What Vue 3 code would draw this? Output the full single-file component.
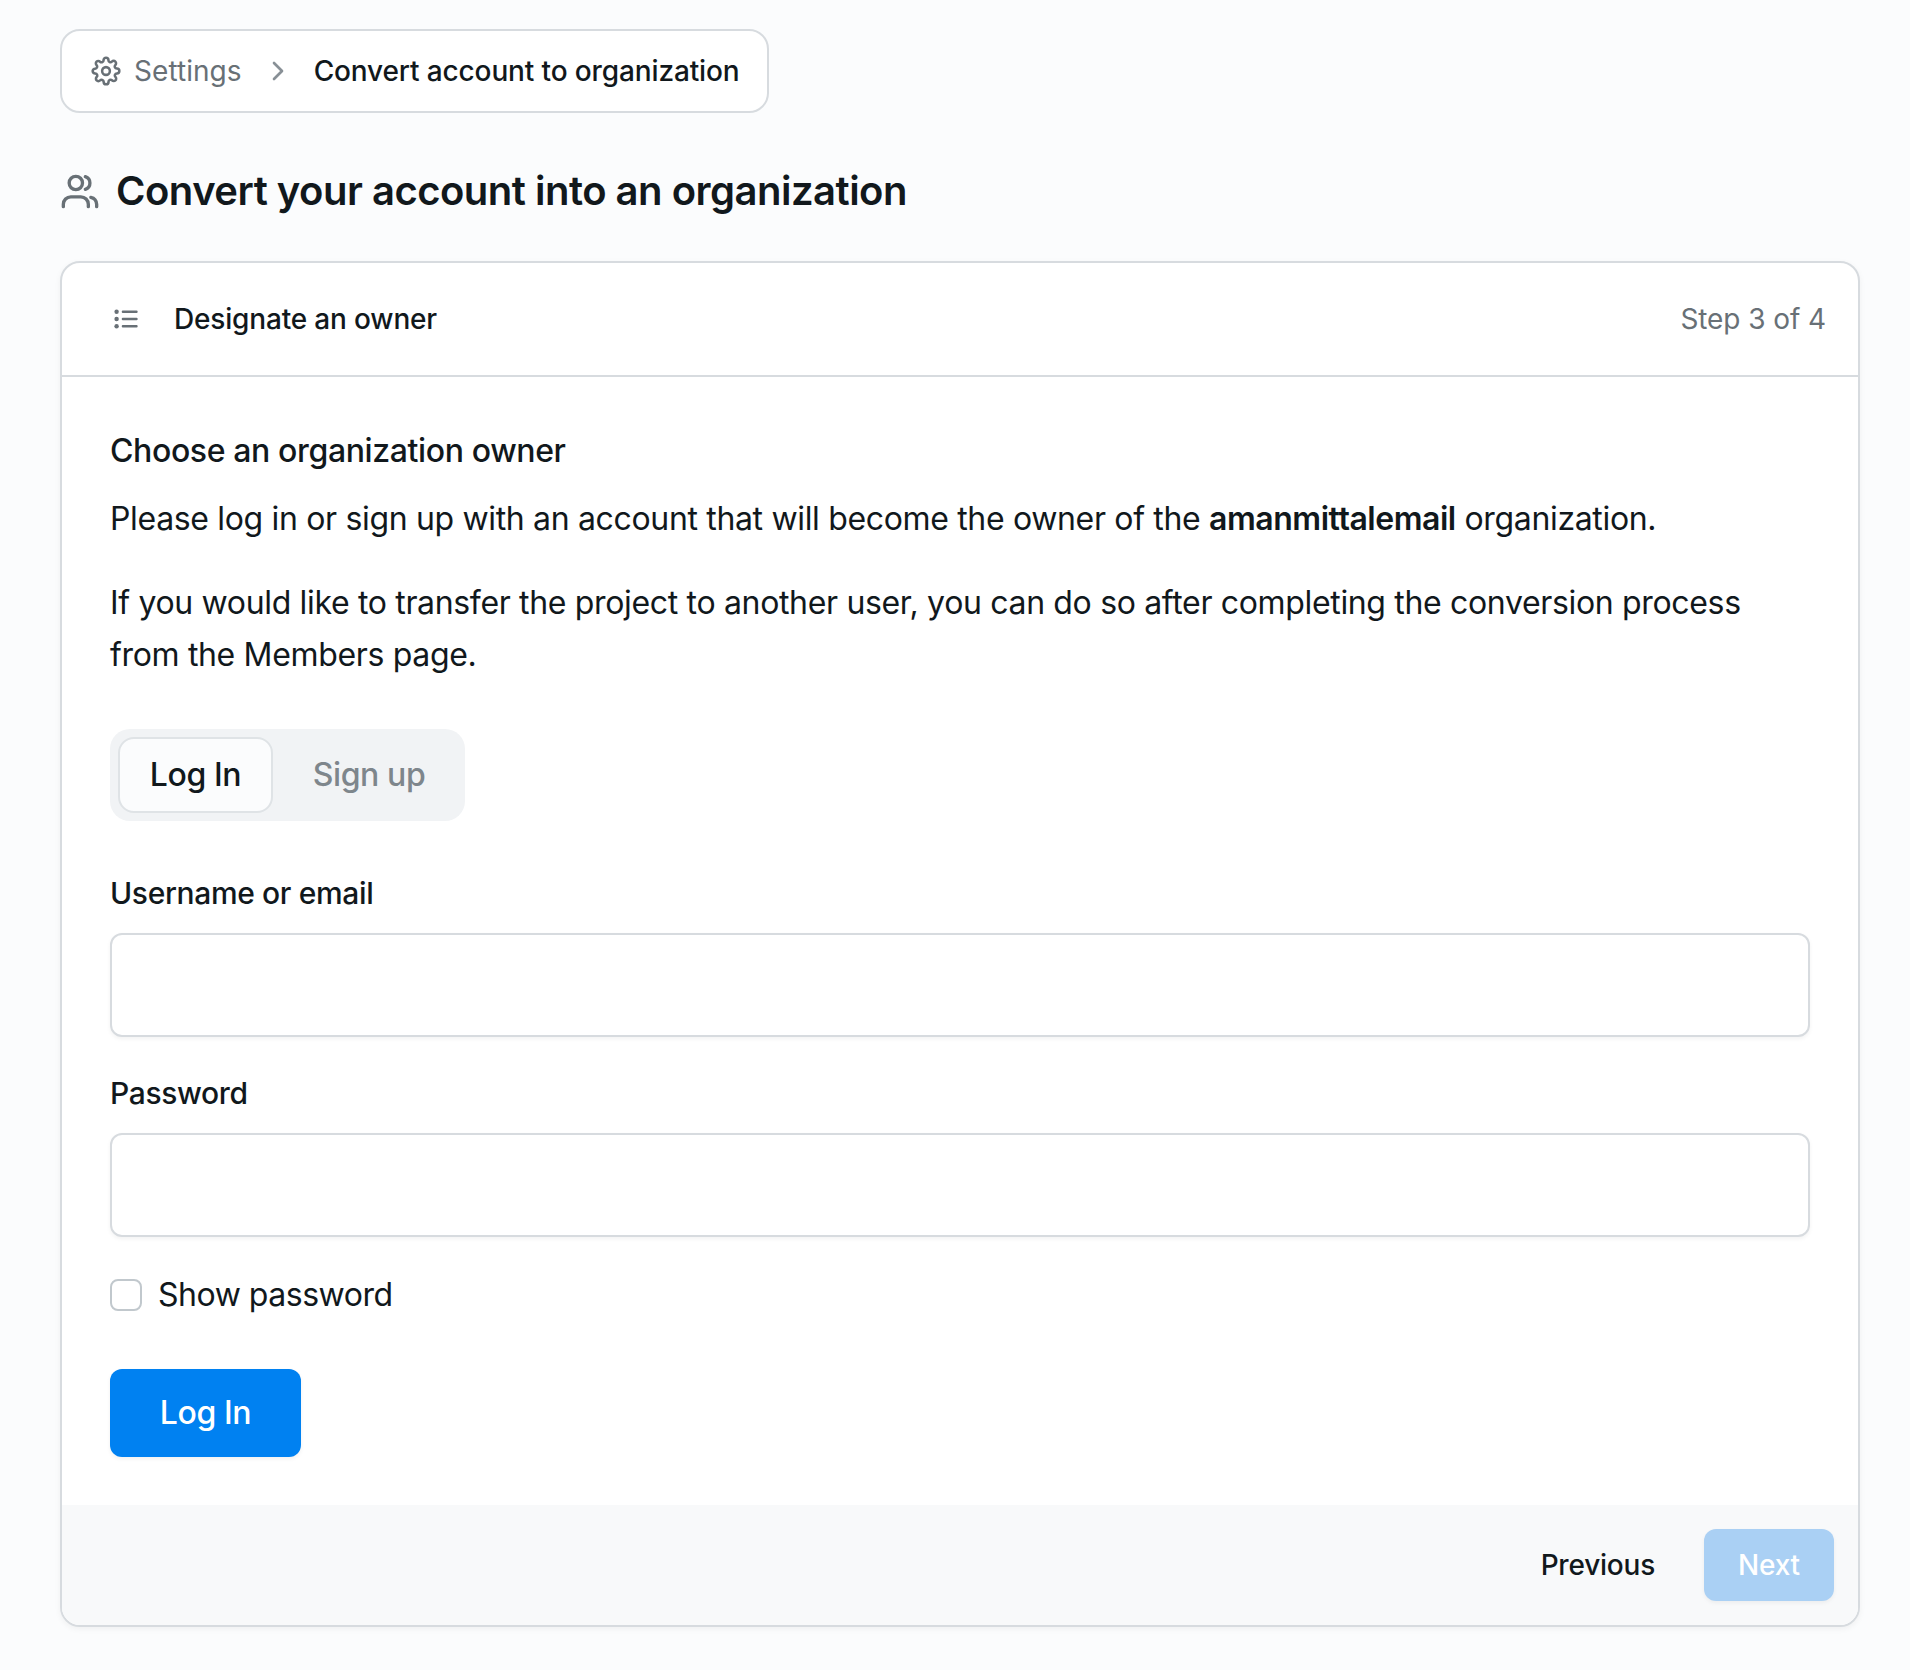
<script setup>
import { ref } from 'vue'

const mode = ref('login')
const username = ref('')
const password = ref('')
const showPassword = ref(false)
</script>

<template>
  <main class="page">
    <nav class="breadcrumb">
      <svg class="icon-32 gear" viewBox="-1.2 -1.2 26.4 26.4">
        <circle cx="12" cy="12" r="3.2" />
        <path d="M19.4 15a1.65 1.65 0 0 0 .33 1.82l.06.06a2 2 0 0 1 0 2.83 2 2 0 0 1-2.83 0l-.06-.06a1.65 1.65 0 0 0-1.82-.33 1.65 1.65 0 0 0-1 1.51V21a2 2 0 0 1-2 2 2 2 0 0 1-2-2v-.09A1.65 1.65 0 0 0 9 19.4a1.65 1.65 0 0 0-1.82.33l-.06.06a2 2 0 0 1-2.83 0 2 2 0 0 1 0-2.83l.06-.06a1.65 1.65 0 0 0 .33-1.82 1.65 1.65 0 0 0-1.51-1H3a2 2 0 0 1-2-2 2 2 0 0 1 2-2h.09A1.65 1.65 0 0 0 4.6 9a1.65 1.65 0 0 0-.33-1.82l-.06-.06a2 2 0 0 1 0-2.83 2 2 0 0 1 2.83 0l.06.06a1.65 1.65 0 0 0 1.82.33H9a1.65 1.65 0 0 0 1-1.51V3a2 2 0 0 1 2-2 2 2 0 0 1 2 2v.09a1.65 1.65 0 0 0 1 1.51 1.65 1.65 0 0 0 1.82-.33l.06-.06a2 2 0 0 1 2.83 0 2 2 0 0 1 0 2.83l-.06.06a1.65 1.65 0 0 0-.33 1.82V9a1.65 1.65 0 0 0 1.51 1H21a2 2 0 0 1 2 2 2 2 0 0 1-2 2h-.09a1.65 1.65 0 0 0-1.51 1z" />
      </svg>
      <a class="crumb">Settings</a>
      <svg class="icon-32 chevron" viewBox="0 0 24 24"><path d="M9 18l6-6-6-6" /></svg>
      <span class="crumb current">Convert account to organization</span>
    </nav>

    <h1 class="title">
      <svg class="icon-40 muted" viewBox="0 0 24 24">
        <circle cx="9.5" cy="7.2" r="4" />
        <path d="M2 21.4V20a4.5 4.5 0 0 1 4.5-4.5h6A4.5 4.5 0 0 1 17 20v1.4" />
        <path d="M15.2 3.4a4 4 0 0 1 0 7.6" />
        <path d="M22 21.4V20a4.5 4.5 0 0 0-3.5-4.2" />
      </svg>
      <span>Convert your account into an organization</span>
    </h1>

    <section class="card">
      <header class="card-header">
        <svg class="icon-32 list" viewBox="0 0 32 32">
          <path d="M12.9 8.8h13.6M12.9 16h13.6M12.9 23.2h13.6" />
          <g class="dots">
            <circle cx="6.6" cy="8.8" r="2.2" />
            <circle cx="6.6" cy="16" r="2.2" />
            <circle cx="6.6" cy="23.2" r="2.2" />
          </g>
        </svg>
        <span class="step-name">Designate an owner</span>
        <span class="step-count">Step 3 of 4</span>
      </header>

      <div class="card-body">
        <h2 class="subtitle">Choose an organization owner</h2>
        <p class="first">Please log in or sign up with an account that will become the owner of the <strong>amanmittalemail</strong> organization.</p>
        <p class="second">If you would like to transfer the project to another user, you can do so after completing the conversion process from the Members page.</p>

        <div class="tabs">
          <button class="tab login" :class="{ active: mode === 'login' }" @click="mode = 'login'">Log In</button>
          <button class="tab signup" :class="{ active: mode === 'signup' }" @click="mode = 'signup'">Sign up</button>
        </div>

        <label class="label" for="username">Username or email</label>
        <input id="username" v-model="username" class="input" type="text" />
        <label class="label next-label" for="password">Password</label>
        <input id="password" v-model="password" class="input" :type="showPassword ? 'text' : 'password'" />

        <label class="check">
          <input v-model="showPassword" class="checkbox" type="checkbox" />
          <span>Show password</span>
        </label>

        <button class="primary">Log In</button>
      </div>

      <footer class="card-footer">
        <button class="previous">Previous</button>
        <button class="next" disabled>Next</button>
      </footer>
    </section>
  </main>
</template>

<style>
body {
  background: #fbfcfd;
}
</style>

<style scoped>
* {
  box-sizing: border-box;
}

.page {
  padding: 29px 50px 43px 60px;
  font-family: Inter, "Liberation Sans", sans-serif;
  color: #11181c;
}

button,
input {
  font-family: inherit;
  margin: 0;
  padding: 0;
}

svg {
  flex: none;
  display: block;
  fill: none;
  stroke: currentColor;
  stroke-width: 2;
  stroke-linecap: round;
  stroke-linejoin: round;
}

.icon-32 {
  width: 32px;
  height: 32px;
}

.icon-40 {
  width: 40px;
  height: 40px;
}

.muted {
  color: #687076;
}

.gear {
  color: #687076;
  stroke-width: 2.1;
}

.breadcrumb {
  display: flex;
  align-items: center;
  width: 709px;
  height: 84px;
  padding-left: 28px;
  background: #fff;
  border: 2px solid #d7dbdf;
  border-radius: 20px;
}

.crumb {
  margin-left: 12px;
  font-size: 28px;
  line-height: 40px;
  letter-spacing: 0.002em;
  color: #687076;
  white-space: nowrap;
}

.crumb.current {
  margin-left: 20px;
  font-weight: 500;
  letter-spacing: -0.0046em;
  color: #11181c;
}

.chevron {
  margin-left: 20px;
  color: #889096;
}

.title {
  display: flex;
  align-items: center;
  gap: 16px;
  height: 52px;
  margin: 52px 0 44px;
  font-size: 40px;
  font-weight: 600;
  line-height: 52px;
  letter-spacing: -0.0125em;
}

.card {
  background: #fff;
  border: 2px solid #d7dbdf;
  border-radius: 20px;
  box-shadow: 0 2px 6px rgba(0, 0, 0, 0.05);
  overflow: hidden;
}

.card-header {
  display: flex;
  align-items: center;
  height: 114px;
  padding: 0 32px 0 48px;
  border-bottom: 2px solid #d7dbdf;
  font-size: 28px;
  line-height: 40px;
}

.list {
  color: #687076;
  stroke-width: 2.4;
}

.dots {
  fill: currentColor;
  stroke: none;
}

.step-name {
  margin-left: 32px;
  font-weight: 500;
  letter-spacing: -0.006em;
}

.step-count {
  margin-left: auto;
  letter-spacing: -0.003em;
  color: #687076;
}

.card-body {
  display: flex;
  flex-direction: column;
  align-items: flex-start;
  padding: 48px;
  font-size: 32px;
  line-height: 52px;
  letter-spacing: -0.0105em;
}

.subtitle {
  margin: 0 0 16px;
  font-size: 32px;
  font-weight: 500;
  letter-spacing: -0.0118em;
}

.first {
  margin: 0 0 32px;
}

.first strong {
  font-weight: 600;
  letter-spacing: -0.0145em;
}

.second {
  margin: 0 0 48px;
}

.tabs {
  display: flex;
  gap: 8px;
  height: 92px;
  margin-bottom: 52px;
  padding: 8px;
  background: #f1f3f5;
  border-radius: 20px;
}

.tab {
  padding-bottom: 2px;
  border: 2px solid transparent;
  border-radius: 16px;
  background: none;
  font-size: 32px;
  font-weight: 500;
  letter-spacing: -0.0125em;
  color: #7e868c;
}

.tab.login {
  width: 155px;
}

.tab.signup {
  width: 176px;
}

.tab.active {
  background: #fbfcfd;
  border-color: #dfe3e6;
  color: #11181c;
}

.label {
  margin-bottom: 20px;
  font-size: 30px;
  font-weight: 500;
  line-height: 40px;
  letter-spacing: -0.012em;
}

.next-label {
  margin-top: 36px;
}

.input {
  align-self: stretch;
  height: 104px;
  padding: 0 32px;
  background: #fff;
  border: 2px solid #d7dbdf;
  border-radius: 12px;
  box-shadow: 0 2px 4px rgba(0, 0, 0, 0.05);
  font-size: 32px;
  outline: none;
}

.check {
  display: flex;
  align-items: center;
  gap: 16px;
  height: 52px;
  margin: 32px 0 48px;
  letter-spacing: -0.0149em;
}

.checkbox {
  appearance: none;
  width: 32px;
  height: 32px;
  background: #fff;
  border: 2px solid #c1c8cd;
  border-radius: 8px;
}

.primary {
  width: 191px;
  height: 88px;
  padding-bottom: 2px;
  background: #0081f1;
  border: 0;
  border-radius: 12px;
  box-shadow: 0 2px 4px rgba(0, 0, 0, 0.06);
  font-size: 32px;
  font-weight: 500;
  letter-spacing: -0.0125em;
  color: #fff;
}

.card-footer {
  display: flex;
  align-items: center;
  justify-content: flex-end;
  height: 120px;
  padding-right: 24px;
  background: #f8f9fa;
}

.previous {
  margin-right: 49px;
  background: none;
  border: 0;
  font-size: 28px;
  font-weight: 500;
  letter-spacing: -0.008em;
  color: #11181c;
}

.next {
  width: 130px;
  height: 72px;
  background: #aad0f4;
  border: 0;
  border-radius: 12px;
  box-shadow: 0 2px 4px rgba(0, 0, 0, 0.05);
  font-size: 28px;
  font-weight: 500;
  letter-spacing: -0.006em;
  color: #fff;
}
</style>
